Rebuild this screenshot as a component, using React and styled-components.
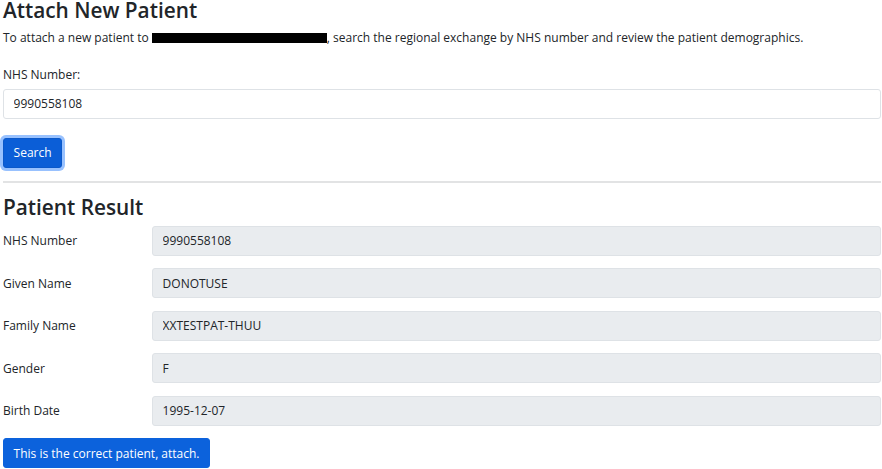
import React from 'react'
import styled, { createGlobalStyle } from 'styled-components'

const GlobalStyle = createGlobalStyle`
  html, body {
    margin: 0;
    padding: 0;
    background: #fff;
  }
  body {
    font-family: "Open Sans", "Liberation Sans", sans-serif;
    font-size: 12px;
    color: #212529;
  }
  * {
    box-sizing: border-box;
  }
`

const Page = styled.div`
  padding: 0 1px 0 3px;
  height: 469px;
  overflow: hidden;
`

const Title = styled.h3`
  margin: ${(p) => p.$top || 0}px 0 0;
  font-size: 20.8px;
  font-weight: 600;
  line-height: 20px;
  color: #212529;
`

const Intro = styled.p`
  margin: 7.8px 0 18px;
  line-height: 19px;
`

const Redacted = styled.span`
  display: inline-block;
  width: 175px;
  height: 10px;
  background: #000;
  vertical-align: -1px;
`

const Label = styled.label`
  display: block;
  line-height: 19px;
  margin-bottom: 5.2px;
`

const TextInput = styled.input`
  display: block;
  width: 100%;
  height: 30px;
  padding: 0 9.6px;
  font: inherit;
  color: #212529;
  background: ${(p) => (p.readOnly ? '#e9ecef' : '#fff')};
  border: 1px solid #dee2e6;
  border-radius: 3px;
  outline: none;
`

const Button = styled.button`
  display: block;
  height: 30px;
  padding: 0 9.6px;
  margin-top: ${(p) => p.$top}px;
  font: inherit;
  color: #fff;
  background: ${(p) => (p.$focused ? '#0b5ed7' : '#0c62dc')};
  border: 1px solid ${(p) => (p.$focused ? '#0a58ca' : '#0c62dc')};
  border-radius: 3px;
  box-shadow: ${(p) => (p.$focused ? '0 0 0 3px rgba(49, 132, 253, 0.5)' : 'none')};
  cursor: pointer;
`

const Divider = styled.hr`
  margin: 13px 0 0;
  border: 0;
  border-top: 2px solid #e2e3e4;
`

const Result = styled.div`
  margin-top: 8.5px;
`

const Row = styled.div`
  display: grid;
  grid-template-columns: 149px 1fr;
  align-items: center;
  margin-bottom: 12.5px;
`

const RowLabel = styled.label`
  line-height: 19px;
`

const fields = [
  ['NHS Number', '9990558108'],
  ['Given Name', 'DONOTUSE'],
  ['Family Name', 'XXTESTPAT-THUU'],
  ['Gender', 'F'],
  ['Birth Date', '1995-12-07'],
]

const App = () => {
  return (
    <>
      <GlobalStyle />
      <Page>
        <Title>Attach New Patient</Title>
        <Intro>
          To attach a new patient to <Redacted />, search the regional exchange by NHS number and review the
          patient demographics.
        </Intro>
        <Label htmlFor="nhs">NHS Number:</Label>
        <TextInput id="nhs" defaultValue="9990558108" />
        <Button $top={19} $focused>
          Search
        </Button>
        <Divider />
        <Title $top={14.5}>Patient Result</Title>
        <Result>
          {fields.map(([label, value]) => (
            <Row key={label}>
              <RowLabel>{label}</RowLabel>
              <TextInput readOnly value={value} />
            </Row>
          ))}
        </Result>
        <Button $top={0}>This is the correct patient, attach.</Button>
      </Page>
    </>
  )
}

export default App
